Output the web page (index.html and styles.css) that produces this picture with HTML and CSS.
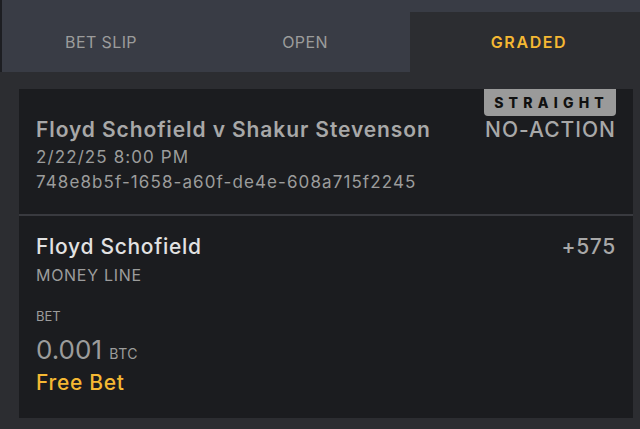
FILE: index.html
```html
<!DOCTYPE html>
<html lang="en">
<head>
    <meta charset="UTF-8">
    <meta name="viewport" content="width=device-width, initial-scale=1.0">
    <title>My Bets - Graded</title>
    <link rel="stylesheet" href="styles.css">
</head>
<body>

<div class="slip">
    <!-- Tabs -->
    <div class="tabs">
        <div class="tab">Bet Slip</div>
        <div class="tab">Open</div>
        <div class="tab active">Graded</div>
    </div>

    <div class="panel">
        <div class="card">
            <div class="event">
                <div class="event-info">
                    <div class="event-name">Floyd Schofield v Shakur Stevenson</div>
                    <div class="event-meta">2/22/25 8:00 PM</div>
                    <div class="event-meta">748e8b5f-1658-a60f-de4e-608a715f2245</div>
                </div>
                <div class="event-status">
                    <span class="badge">Straight</span>
                    <span class="status">NO-ACTION</span>
                </div>
            </div>

            <div class="selection">
                <div class="row">
                    <span class="pick">Floyd Schofield</span>
                    <span class="odds">+575</span>
                </div>
                <div class="market">Money Line</div>

                <div class="label">Bet</div>
                <div class="amount">0.001 <span class="currency">BTC</span></div>
                <div class="free-bet">Free Bet</div>
            </div>
        </div>
    </div>
</div>

</body>
</html>
```

FILE: styles.css
```css
body {
    font-family: Inter, "Noto Sans", sans-serif;
    margin: 0;
    background-color: #2c2d31;
    color: #9c9c9c;
}
.slip {
    width: 640px;
    height: 429px;
    overflow: hidden;
}
.tabs {
    display: flex;
    height: 72px;
    background-color: #393c45;
    border-left: 2px solid #1d1e22;
    box-sizing: border-box;
}
.tab {
    display: flex;
    align-items: center;
    justify-content: center;
    padding-top: 12px;
    box-sizing: border-box;
    text-transform: uppercase;
    font-size: 16px;
    letter-spacing: 0.4px;
    color: #9c9c9c;
}
.tab:nth-child(1) {
    width: 198px;
}
.tab:nth-child(2) {
    width: 210px;
}
.tab.active {
    flex: 1;
    margin-top: 12px;
    padding: 0 0 0 8px;
    background-color: #2c2d31;
    color: #f5b833;
    font-weight: 600;
    letter-spacing: 1.6px;
}
.panel {
    padding: 17px 7px 11px 19px;
}
.card {
    background-color: #1b1c1f;
    height: 329px;
}
.event {
    display: flex;
    justify-content: space-between;
    padding: 0 17px 0 17px;
    height: 125px;
    border-bottom: 2px solid #393a3f;
}
.event-info {
    padding-top: 28px;
}
.event-name {
    font-size: 21px;
    font-weight: 600;
    letter-spacing: 0.9px;
    color: #a8a8a8;
    margin-bottom: 3px;
}
.event-meta {
    font-size: 17px;
    letter-spacing: 1.1px;
    line-height: 25px;
}
.event-status {
    display: flex;
    flex-direction: column;
    align-items: flex-end;
}
.badge {
    background-color: #9a9a9a;
    color: #111;
    font-size: 14px;
    font-weight: 800;
    text-transform: uppercase;
    letter-spacing: 5.2px;
    padding: 5px 7px 5px 10px;
    border-radius: 0 0 4px 4px;
}
.status {
    font-size: 21px;
    font-weight: 500;
    letter-spacing: 1px;
    color: #a8a8a8;
    margin-top: 1px;
}
.selection {
    padding: 18px 17px 0 17px;
}
.row {
    display: flex;
    justify-content: space-between;
    font-size: 21px;
    font-weight: 500;
    letter-spacing: 0.7px;
}
.pick {
    color: #e2e2e2;
}
.odds {
    color: #a8a8a8;
}
.market {
    font-size: 16px;
    letter-spacing: 0.7px;
    text-transform: uppercase;
    margin-top: 6px;
}
.label {
    font-size: 13px;
    text-transform: uppercase;
    margin-top: 23px;
}
.amount {
    font-size: 26px;
    margin-top: 10px;
}
.currency {
    font-size: 14px;
    letter-spacing: 0.5px;
}
.free-bet {
    font-size: 21px;
    font-weight: 500;
    letter-spacing: 0.7px;
    color: #f5b833;
    margin-top: 5px;
}
```
